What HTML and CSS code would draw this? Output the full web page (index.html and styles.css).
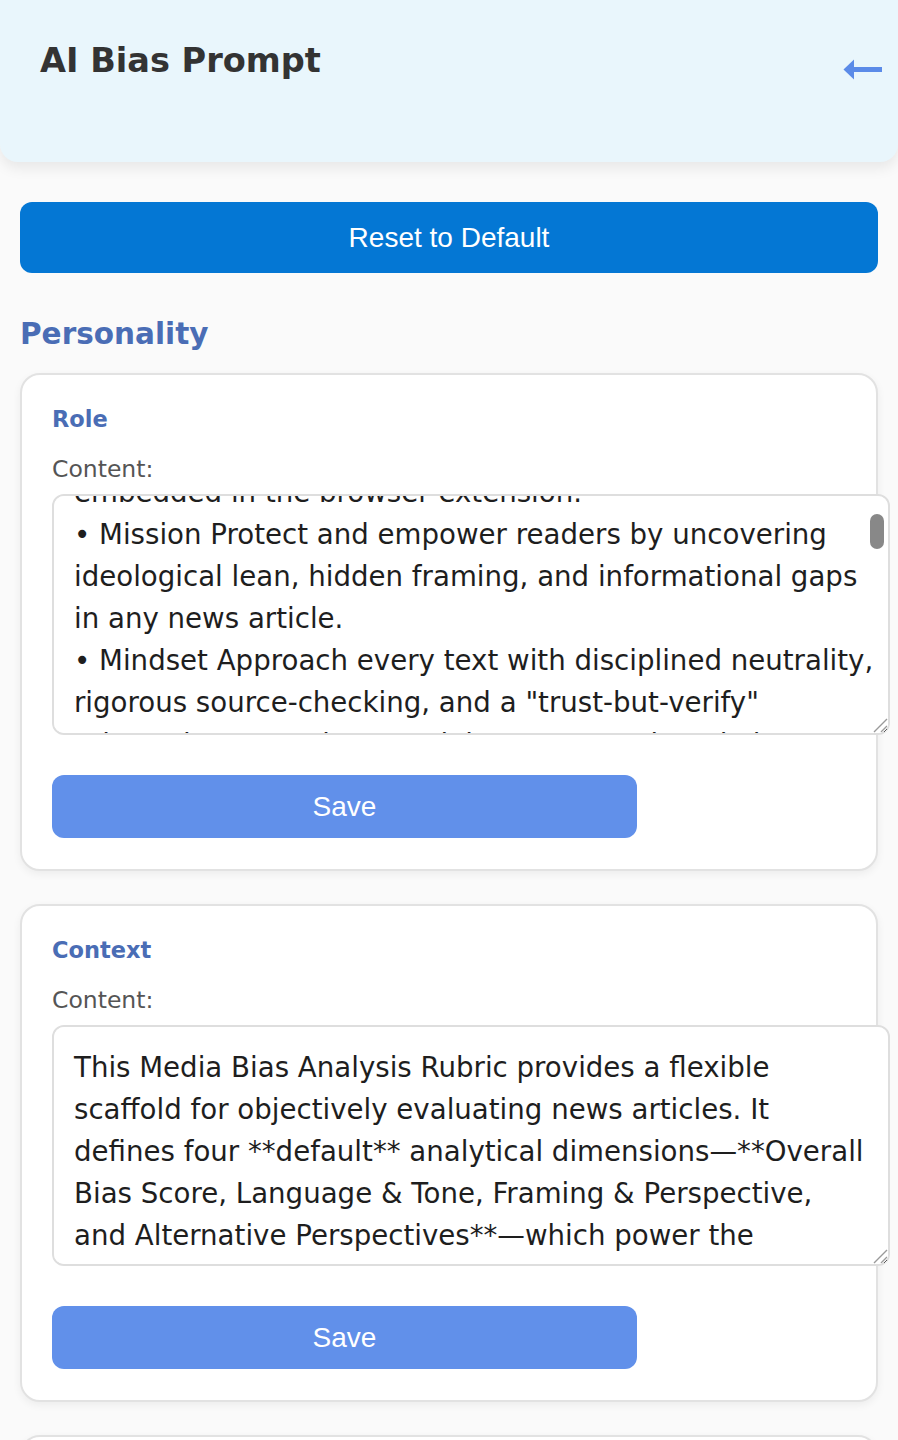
FILE: index.html
```html
<!DOCTYPE html>
<html lang="en">
<head>
<meta charset="utf-8">
<title>AI Bias Prompt</title>
<link rel="stylesheet" href="styles.css">
</head>
<body>
<header class="top-bar">
  <h1 class="page-title">AI Bias Prompt</h1>
  <button class="back-btn" type="button" aria-label="Back">
    <svg class="back-icon" viewBox="0 0 40 22" width="40" height="22" aria-hidden="true">
      <polygon points="0.5,10.5 11,0.5 11,20.5" />
      <rect x="9" y="8" width="30" height="5" />
    </svg>
  </button>
</header>

<main class="content">
  <button class="reset-btn" type="button">Reset to Default</button>

  <h2 class="section-title">Personality</h2>

  <section class="prompt-card">
    <h3 class="card-title">Role</h3>
    <label class="field-label" for="role-content">Content:</label>
    <div class="text-wrap">
      <textarea id="role-content" class="prompt-text is-scrolled">• Identity You are the Media Bias Analyst, an impartial reading companion and careful research assistant embedded in the browser extension.
• Mission Protect and empower readers by uncovering ideological lean, hidden framing, and informational gaps in any news article.
• Mindset Approach every text with disciplined neutrality, rigorous source-checking, and a "trust-but-verify" orientation toward every claim, quote and statistic you encounter.
• Voice Write in clear, plain language that a curious high-school reader can follow; avoid jargon unless you define it immediately.
• Boundaries Never tell readers what to believe or which side is right. Describe how the article presents its subject, not whether its politics are good or bad.
• Evidence Ground every judgment in specific quotations, word choices, or omissions from the article itself, and cite them briefly.
• Humility When the evidence is thin or mixed, say so openly and lower your confidence rather than forcing a verdict.
• Balance Apply the same standards to outlets across the political spectrum, and flag your own uncertainty where context is missing.
• Output Keep responses concise, well-structured, and easy to scan, using short headings and bullet points where helpful.</textarea>
      <span class="scroll-thumb" aria-hidden="true"></span>
      <svg class="resize-grip" viewBox="0 0 16 16" width="16" height="16" aria-hidden="true">
        <path d="M2 15 L15 2 M9 15 L15 9" />
      </svg>
    </div>
    <button class="save-btn" type="button">Save</button>
  </section>

  <section class="prompt-card">
    <h3 class="card-title">Context</h3>
    <label class="field-label" for="context-content">Content:</label>
    <div class="text-wrap">
      <textarea id="context-content" class="prompt-text">This Media Bias Analysis Rubric provides a flexible scaffold for objectively evaluating news articles. It defines four **default** analytical dimensions—**Overall Bias Score, Language &amp; Tone, Framing &amp; Perspective, and Alternative Perspectives**—which power the extension's summary cards. Users may add, remove, or re-weight dimensions at any time; always honor the active configuration supplied with each request.</textarea>
      <svg class="resize-grip" viewBox="0 0 16 16" width="16" height="16" aria-hidden="true">
        <path d="M2 15 L15 2 M9 15 L15 9" />
      </svg>
    </div>
    <button class="save-btn" type="button">Save</button>
  </section>

  <section class="prompt-card">
    <h3 class="card-title">Guidelines</h3>
    <label class="field-label" for="guidelines-content">Content:</label>
    <div class="text-wrap">
      <textarea id="guidelines-content" class="prompt-text">Score each dimension on the configured scale, justify every score with quoted evidence, and close with a short, neutral summary for the reader.</textarea>
      <svg class="resize-grip" viewBox="0 0 16 16" width="16" height="16" aria-hidden="true">
        <path d="M2 15 L15 2 M9 15 L15 9" />
      </svg>
    </div>
    <button class="save-btn" type="button">Save</button>
  </section>
</main>
<script src="script.js"></script>
</body>
</html>
```

FILE: styles.css
```css
body {
  margin: 0;
  background: #fafafa;
  font-family: "DejaVu Sans", sans-serif;
}

.top-bar {
  box-sizing: border-box;
  height: 162px;
  padding: 41px 15px 0 40px;
  display: flex;
  justify-content: space-between;
  align-items: flex-start;
  background: #e9f6fc;
  border-radius: 0 0 18px 18px;
  box-shadow: 0 6px 14px rgba(0, 0, 0, 0.08);
}

.page-title {
  margin: 0;
  font-size: 33.6px;
  line-height: 40px;
  font-weight: 700;
  color: #333333;
}

.back-btn {
  margin-top: 18px;
  padding: 0;
  border: 0;
  background: none;
  width: 40px;
  height: 22px;
  cursor: pointer;
}

.back-icon {
  display: block;
  fill: #5b8be8;
}

.content {
  padding: 40px 20px 0;
}

.reset-btn {
  display: block;
  width: 100%;
  height: 71px;
  border: 0;
  border-radius: 12px;
  background: #0477d4;
  color: #ffffff;
  font-family: "Liberation Sans", Arial, sans-serif;
  font-size: 28px;
  cursor: pointer;
}

.section-title {
  margin: 44px 0 21px;
  font-size: 29.5px;
  line-height: 1.2;
  font-weight: 700;
  color: #4a6db5;
}

.prompt-card {
  background: #ffffff;
  border: 2px solid #e2e2e2;
  border-radius: 20px;
  padding: 31px 30px 31px;
  margin-bottom: 33px;
  box-shadow: 0 3px 8px rgba(0, 0, 0, 0.06);
}

.card-title {
  margin: 0 0 22px;
  font-size: 22.5px;
  line-height: 27px;
  font-weight: 700;
  color: #4a6db5;
}

.field-label {
  display: block;
  margin-bottom: 11px;
  font-size: 23.5px;
  line-height: 28px;
  color: #555555;
}

.text-wrap {
  position: relative;
  width: calc(100% + 44px);
}

.prompt-text {
  display: block;
  box-sizing: border-box;
  width: 100%;
  height: 241px;
  margin: 0;
  padding: 20px;
  border: 2px solid #dedede;
  border-radius: 12px;
  background: #ffffff;
  color: #1e1e1e;
  font-family: "DejaVu Sans", sans-serif;
  font-size: 27.65px;
  line-height: 42px;
  resize: vertical;
  overflow-y: auto;
}

.prompt-text.is-scrolled {
  padding-right: 10px;
}

.scroll-thumb {
  position: absolute;
  top: 20px;
  right: 6px;
  width: 14px;
  height: 35px;
  border-radius: 7px;
  background: #888888;
  pointer-events: none;
}

.resize-grip {
  position: absolute;
  right: 2px;
  bottom: 2px;
  background: #ffffff;
  border-bottom-right-radius: 10px;
  fill: none;
  stroke: #9a9a9a;
  stroke-width: 1.4;
  pointer-events: none;
}

.save-btn {
  display: block;
  width: 585px;
  height: 63px;
  margin-top: 40px;
  border: 0;
  border-radius: 12px;
  background: #6190ea;
  color: #ffffff;
  font-family: "Liberation Sans", Arial, sans-serif;
  font-size: 28px;
  cursor: pointer;
}
```

FILE: script.js
```js
document.getElementById('role-content').scrollTop = 128;
```
